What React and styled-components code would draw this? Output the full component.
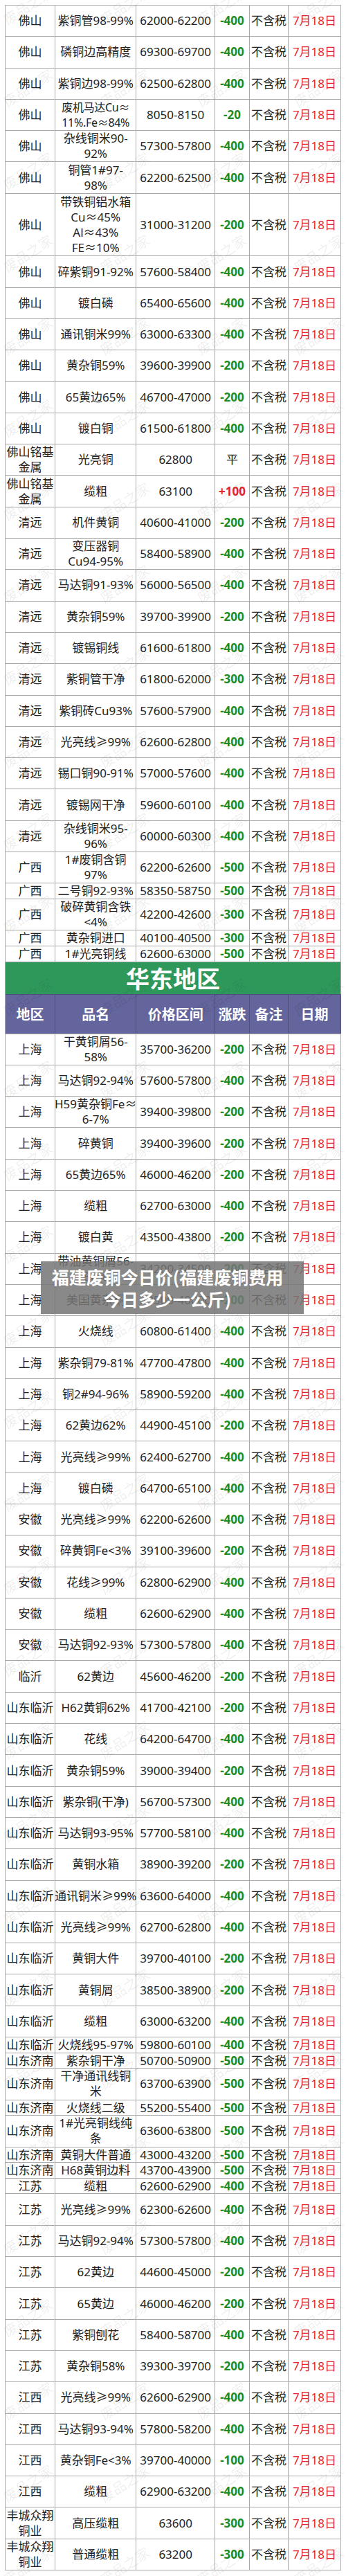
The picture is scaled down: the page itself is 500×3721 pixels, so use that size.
import React from 'react';
import styled, { createGlobalStyle } from 'styled-components';

const UNIT = 22.65;
const COLS = '72px 117.4px 113.6px 50px 56px 76px';
const LINE = '#a9a9a9';

const GlobalStyle = createGlobalStyle`
  html, body {
    margin: 0;
    padding: 0;
    background: #fff;
  }
  body {
    font-family: "Noto Sans", "Noto Sans CJK SC", sans-serif;
    color: #222;
  }
`;

const Page = styled.div`
  position: relative;
  width: 500px;
  overflow: hidden;
  padding: 7px 0 8px 7px;
  box-sizing: border-box;
`;

const Table = styled.div`
  width: 486px;
  border-top: 1px solid ${LINE};
  border-left: 1px solid ${LINE};
  box-sizing: border-box;
`;

const Row = styled.div`
  display: grid;
  grid-template-columns: ${COLS};
  height: ${({ $u }) => $u * UNIT}px;
  border-bottom: 1px solid ${LINE};
  box-sizing: border-box;
`;

const Cell = styled.div`
  display: flex;
  align-items: center;
  justify-content: center;
  border-right: 1px solid ${LINE};
  box-sizing: border-box;
  min-width: 0;
  text-align: center;
  white-space: pre;
  font-size: ${({ $tight }) => ($tight ? 16 : 17)}px;
  letter-spacing: ${({ $tight }) => ($tight ? '-0.3px' : '0')};
  line-height: 22px;
`;

const tones = {
  down: { color: '#1b8c26', weight: 700 },
  up: { color: '#e3262b', weight: 700 },
  flat: { color: '#222', weight: 400 },
};

const ChangeCell = styled(Cell)`
  color: ${({ $tone }) => tones[$tone].color};
  font-weight: ${({ $tone }) => tones[$tone].weight};
`;

const DateCell = styled(Cell)`
  color: #e3262b;
`;

const Banner = styled.div`
  height: 47px;
  display: flex;
  align-items: center;
  justify-content: center;
  background: #2e985a;
  color: #fff;
  font-size: 34px;
  font-weight: 700;
  font-family: "Noto Sans CJK SC", sans-serif;
  border-right: 1px solid ${LINE};
  border-bottom: 1px solid #4d4f7e;
  box-sizing: border-box;
`;

const HeadRow = styled.div`
  display: grid;
  grid-template-columns: ${COLS};
  height: 57px;
  background: #63659c;
  border-bottom: 1px solid ${LINE};
  box-sizing: border-box;
`;

const HeadCell = styled.div`
  display: flex;
  align-items: center;
  justify-content: center;
  color: #fff;
  font-size: 20px;
  font-weight: 700;
  font-family: "Noto Sans CJK SC", sans-serif;
  border-right: 1px solid #4d4f7e;
`;

const WatermarkLayer = styled.div`
  position: absolute;
  top: -52px;
  left: -30px;
  width: 560px;
  display: grid;
  grid-template-columns: repeat(4, 140px);
  grid-auto-rows: 119.3px;
  pointer-events: none;
  z-index: 2;
`;

const Mark = styled.span`
  display: flex;
  align-items: center;
  justify-content: center;
  font-family: "Noto Sans CJK SC", sans-serif;
  font-size: 20px;
  color: rgba(0, 0, 0, 0.08);
  transform: rotate(-33deg);
  white-space: nowrap;
`;

const TitleOverlay = styled.div`
  position: absolute;
  top: 1822px;
  left: 59px;
  width: 380px;
  height: 76px;
  padding: 6px 14px 6px 0;
  box-sizing: border-box;
  background: rgba(118, 118, 118, 0.86);
  color: #fff;
  font-family: "Noto Sans CJK SC", sans-serif;
  font-size: 25px;
  font-weight: 700;
  line-height: 32px;
  text-align: center;
  z-index: 3;
`;

const south = [
  ['佛山', '紫铜管98-99%', '62000-62200', '-400', 2],
  ['佛山', '磷铜边高精度', '69300-69700', '-400', 2],
  ['佛山', '紫铜边98-99%', '62500-62800', '-400', 2],
  ['佛山', '废机马达Cu≈\n11%.Fe≈84%', '8050-8150', '-20', 2],
  ['佛山', '杂线铜米90-\n92%', '57300-57800', '-400', 2],
  ['佛山', '铜管1#97-\n98%', '62200-62500', '-400', 2],
  ['佛山', '带铁铜铝水箱\nCu≈45%\nAl≈43%\nFE≈10%', '31000-31200', '-200', 4],
  ['佛山', '碎紫铜91-92%', '57600-58400', '-400', 2],
  ['佛山', '镀白磷', '65400-65600', '-400', 2],
  ['佛山', '通讯铜米99%', '63000-63300', '-400', 2],
  ['佛山', '黄杂铜59%', '39600-39900', '-200', 2],
  ['佛山', '65黄边65%', '46700-47000', '-200', 2],
  ['佛山', '镀白铜', '61500-61800', '-400', 2],
  ['佛山铭基\n金属', '光亮铜', '62800', '平', 2],
  ['佛山铭基\n金属', '缆粗', '63100', '+100', 2],
  ['清远', '机件黄铜', '40600-41000', '-200', 2],
  ['清远', '变压器铜\nCu94-95%', '58400-58900', '-400', 2],
  ['清远', '马达铜91-93%', '56000-56500', '-400', 2],
  ['清远', '黄杂铜59%', '39700-39900', '-200', 2],
  ['清远', '镀锡铜线', '61600-61800', '-400', 2],
  ['清远', '紫铜管干净', '61800-62000', '-300', 2],
  ['清远', '紫铜砖Cu93%', '57600-57900', '-400', 2],
  ['清远', '光亮线≥99%', '62600-62800', '-400', 2],
  ['清远', '锡口铜90-91%', '57000-57600', '-400', 2],
  ['清远', '镀锡网干净', '59600-60100', '-400', 2],
  ['清远', '杂线铜米95-\n96%', '60000-60300', '-400', 2],
  ['广西', '1#废铜含铜\n97%', '62200-62600', '-500', 2],
  ['广西', '二号铜92-93%', '58350-58750', '-500', 1],
  ['广西', '破碎黄铜含铁\n<4%', '42200-42600', '-300', 2],
  ['广西', '黄杂铜进口', '40100-40500', '-300', 1],
  ['广西', '1#光亮铜线', '62600-63000', '-500', 1],
];

const east = [
  ['上海', '干黄铜屑56-\n58%', '35700-36200', '-200', 2],
  ['上海', '马达铜92-94%', '57600-57800', '-400', 2],
  ['上海', 'H59黄杂铜Fe≈\n6-7%', '39400-39800', '-200', 2],
  ['上海', '碎黄铜', '39400-39600', '-200', 2],
  ['上海', '65黄边65%', '46000-46200', '-200', 2],
  ['上海', '缆粗', '62700-63000', '-400', 2],
  ['上海', '镀白黄', '43500-43800', '-200', 2],
  ['上海', '带油黄铜屑56-\n58%', '34200-34500', '-200', 2],
  ['上海', '美国黄杂铜', '39500-40000', '-200', 2],
  ['上海', '火烧线', '60800-61400', '-400', 2],
  ['上海', '紫杂铜79-81%', '47700-47800', '-400', 2],
  ['上海', '铜2#94-96%', '58900-59200', '-400', 2],
  ['上海', '62黄边62%', '44900-45100', '-200', 2],
  ['上海', '光亮线≥99%', '62400-62700', '-400', 2],
  ['上海', '镀白磷', '64700-65100', '-400', 2],
  ['安徽', '光亮线≥99%', '62200-62600', '-400', 2],
  ['安徽', '碎黄铜Fe<3%', '39100-39600', '-200', 2],
  ['安徽', '花线≥99%', '62800-62900', '-400', 2],
  ['安徽', '缆粗', '62600-62900', '-400', 2],
  ['安徽', '马达铜92-93%', '57300-57800', '-400', 2],
  ['临沂', '62黄边', '45600-46200', '-200', 2],
  ['山东临沂', 'H62黄铜62%', '41700-42100', '-200', 2],
  ['山东临沂', '花线', '64200-64700', '-400', 2],
  ['山东临沂', '黄杂铜59%', '39000-39400', '-200', 2],
  ['山东临沂', '紫杂铜(干净)', '56700-57300', '-400', 2],
  ['山东临沂', '马达铜93-95%', '57700-58100', '-400', 2],
  ['山东临沂', '黄铜水箱', '38900-39200', '-200', 2],
  ['山东临沂', '通讯铜米≥99%', '63600-64000', '-400', 2],
  ['山东临沂', '光亮线≥99%', '62700-62800', '-400', 2],
  ['山东临沂', '黄铜大件', '39700-40100', '-200', 2],
  ['山东临沂', '黄铜屑', '38500-38900', '-200', 2],
  ['山东临沂', '缆粗', '63000-63200', '-400', 2],
  ['山东临沂', '火烧线95-97%', '59800-60100', '-400', 1],
  ['山东济南', '紫杂铜干净', '50700-50900', '-500', 1],
  ['山东济南', '干净通讯线铜\n米', '63700-63900', '-500', 2],
  ['山东济南', '火烧线二级', '55200-55400', '-500', 1],
  ['山东济南', '1#光亮铜线纯\n条', '63600-63800', '-500', 2],
  ['山东济南', '黄铜大件普通', '43000-43200', '-500', 1],
  ['山东济南', 'H68黄铜边料', '43700-43900', '-500', 1],
  ['江苏', '缆粗', '62600-62900', '-400', 1],
  ['江苏', '光亮线≥99%', '62300-62600', '-400', 2],
  ['江苏', '马达铜92-94%', '57300-57800', '-400', 2],
  ['江苏', '62黄边', '44600-45000', '-200', 2],
  ['江苏', '65黄边', '46000-46200', '-200', 2],
  ['江苏', '紫铜刨花', '58400-58700', '-400', 2],
  ['江苏', '黄杂铜58%', '39300-39700', '-200', 2],
  ['江西', '光亮线≥99%', '62600-62900', '-400', 2],
  ['江西', '马达铜93-94%', '57800-58200', '-400', 2],
  ['江西', '黄杂铜Fe<3%', '39700-40000', '-100', 2],
  ['江西', '缆粗', '62900-63200', '-400', 2],
  ['丰城众翔\n铜业', '高压缆粗', '63600', '-300', 2],
  ['丰城众翔\n铜业', '普通缆粗', '63200', '-300', 2],
];

const headers = ['地区', '品名', '价格区间', '涨跌', '备注', '日期'];

const toneOf = (change) => {
  if (change.startsWith('-')) return 'down';
  if (change.startsWith('+')) return 'up';
  return 'flat';
};

const isTight = (text) => text.split('\n').some((line) => line.length >= 10);

const PriceRow = ({ row }) => {
  const [region, name, price, change, units] = row;
  return (
    <Row $u={units}>
      <Cell>{region}</Cell>
      <Cell $tight={isTight(name)}>{name}</Cell>
      <Cell>{price}</Cell>
      <ChangeCell $tone={toneOf(change)}>{change}</ChangeCell>
      <Cell>不含税</Cell>
      <DateCell>7月18日</DateCell>
    </Row>
  );
};

export default function App() {
  const marks = Array.from({ length: 33 * 4 });
  return (
    <>
      <GlobalStyle />
      <Page>
        <Table>
          {south.map((r, i) => (
            <PriceRow key={`s${i}`} row={r} />
          ))}
          <Banner>华东地区</Banner>
          <HeadRow>
            {headers.map((h) => (
              <HeadCell key={h}>{h}</HeadCell>
            ))}
          </HeadRow>
          {east.map((r, i) => (
            <PriceRow key={`e${i}`} row={r} />
          ))}
        </Table>

        <WatermarkLayer>
          {marks.map((_, i) => (
            <Mark key={i}>废品之家</Mark>
          ))}
        </WatermarkLayer>

        <TitleOverlay>
          福建废铜今日价(福建废铜费用
          <br />
          今日多少一公斤)
        </TitleOverlay>
      </Page>
    </>
  );
}
